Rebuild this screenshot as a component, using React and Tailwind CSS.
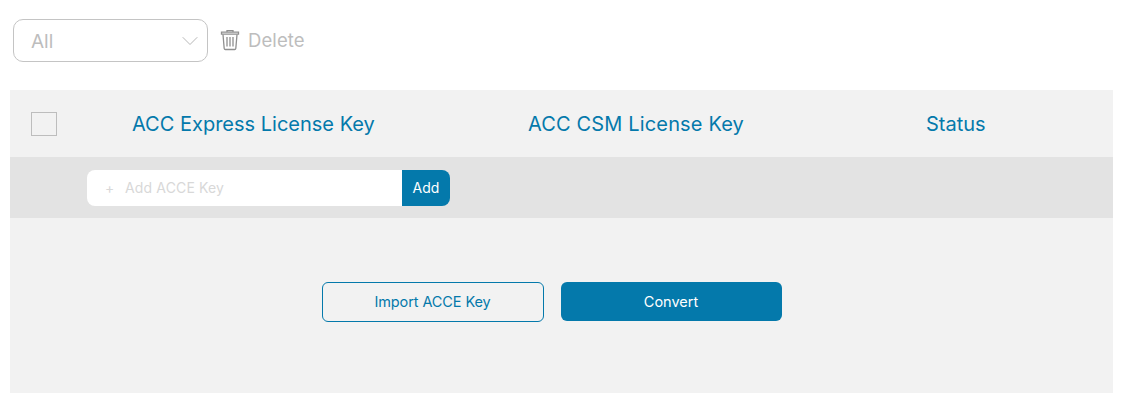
import { ChevronDown } from 'lucide-react';

const FONT = 'font-["Inter","Noto_Sans",sans-serif]';

function TrashIcon() {
  return (
    <svg width="20" height="22" viewBox="0 0 20 22" fill="none" stroke="#8f8f8f" strokeWidth="1.3">
      <path d="M7 3V1.6h6V3" />
      <path d="M1.5 3.2h17v2h-17z" />
      <path d="M3 5.5l1.2 14a1.2 1.2 0 0 0 1.2 1h9.2a1.2 1.2 0 0 0 1.2-1l1.2-14" />
      <path d="M7 8v9.5M10 8v9.5M13 8v9.5" />
    </svg>
  );
}

export default function App() {
  return (
    <div className={`w-[1128px] h-[407px] bg-white overflow-hidden ${FONT}`}>
      {/* Toolbar */}
      <div className="flex items-center h-[90px] pl-[13px] pb-[10px]">
        <div className="flex items-center justify-between w-[195px] h-[43px] pt-[2px] border border-[#c4c4c4] rounded-[10px] pl-[17px] pr-[3px]">
          <span className="pt-[2px] text-[19px] text-[#bdbdbd]">All</span>
          <ChevronDown size={28} strokeWidth={0.8} color="#b0b0b0" />
        </div>
        <div className="flex items-center ml-[12px] gap-[8px]">
          <TrashIcon />
          <span className="pt-[2px] text-[18.5px] tracking-[0.1px] text-[#bdbdbd]">Delete</span>
        </div>
      </div>

      <div className="ml-[10px] w-[1103px] h-[303px] bg-[#f2f2f2]">
        {/* Header row */}
        <div className="flex items-center h-[67px] text-[20px] text-[#0479ab]">
          <div className="w-[122px] pl-[21px]">
            <div className="w-[26px] h-[24px] border border-[#bdbdbd]" />
          </div>
          <div className="w-[396px]">ACC Express License Key</div>
          <div className="w-[398px] tracking-[0.15px]">ACC CSM License Key</div>
          <div>Status</div>
        </div>

        {/* Add row */}
        <div className="flex items-center h-[61px] pl-[77px] bg-[#e3e3e3]">
          <div className="flex items-center w-[315px] h-[36px] bg-white rounded-l-[8px] pl-[18px] text-[14px] text-[#d8d8d8]">
            <span className="w-[20px]">+</span>
            <span className="tracking-[0.15px]">Add ACCE Key</span>
          </div>
          <button className="w-[48px] h-[36px] bg-[#0479ab] rounded-r-[8px] text-[14px] text-white">Add</button>
        </div>

        {/* Actions */}
        <div className="flex justify-center gap-[17px] pt-[64px] pr-[20px]">
          <button className="w-[222px] h-[40px] border border-[#0479ab] rounded-[6px] text-[14.5px] tracking-[-0.1px] text-[#0479ab]">Import ACCE Key</button>
          <button className="w-[221px] h-[39px] bg-[#0479ab] rounded-[6px] text-[14.5px] text-white">Convert</button>
        </div>
      </div>
    </div>
  );
}
